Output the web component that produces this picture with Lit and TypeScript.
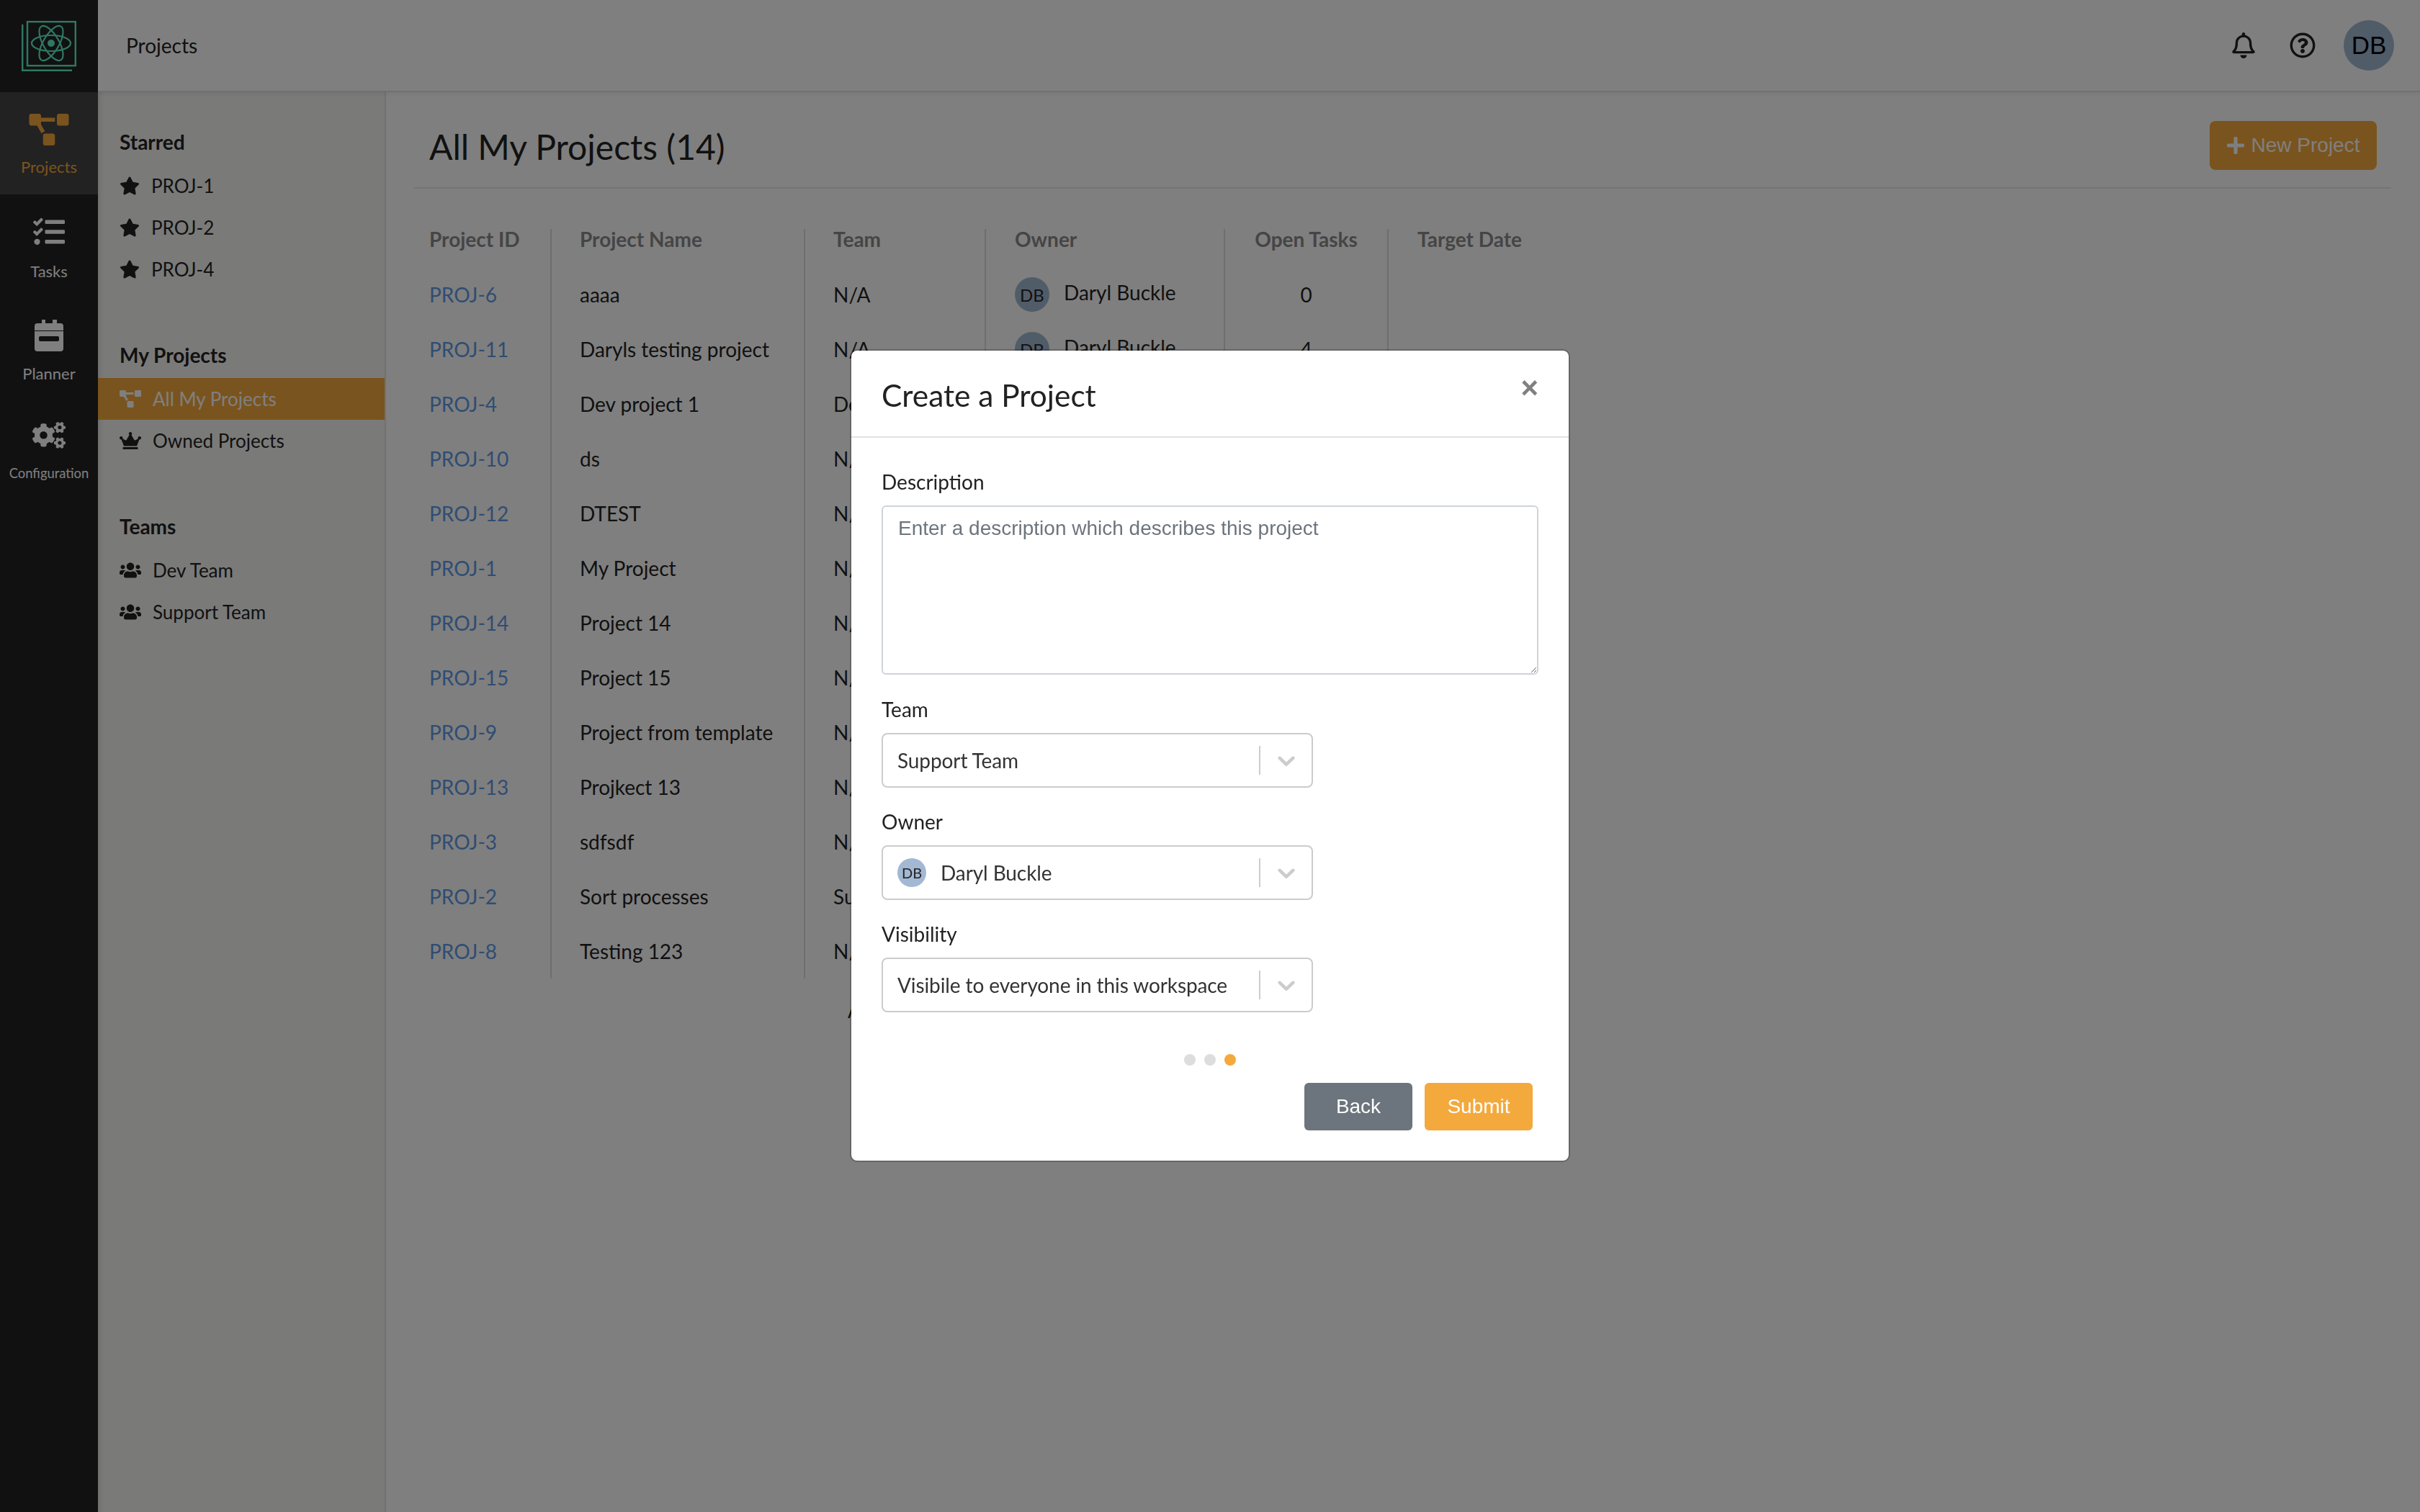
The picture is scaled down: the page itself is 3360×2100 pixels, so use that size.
import { LitElement, css, html, svg } from "lit";
import { customElement } from "lit/decorators.js";

const ICONS = {
  star: ["0 0 576 512", "M259.3 17.8L194 150.2 47.9 171.5c-26.2 3.8-36.7 36.1-17.7 54.6l105.7 103-25 145.5c-4.5 26.3 23.2 46 46.4 33.7L288 439.6l130.7 68.7c23.2 12.2 50.9-7.4 46.4-33.7l-25-145.5 105.7-103c19-18.5 8.5-50.8-17.7-54.6L382 150.2 316.7 17.8c-11.7-23.6-45.6-23.9-57.4 0z"],
  diagram: ["0 0 640 512", "M384 320H256c-17.67 0-32 14.33-32 32v128c0 17.67 14.33 32 32 32h128c17.67 0 32-14.33 32-32V352c0-17.67-14.33-32-32-32zM192 32c0-17.67-14.33-32-32-32H32C14.33 0 0 14.33 0 32v128c0 17.67 14.33 32 32 32h95.72l73.16 128.04C211.98 300.98 232.4 288 256 288h.28L192 175.51V128h224V64H192V32zM608 0H480c-17.67 0-32 14.33-32 32v128c0 17.67 14.33 32 32 32h128c17.67 0 32-14.33 32-32V32c0-17.67-14.33-32-32-32z"],
  tasks: ["0 0 512 512", "M139.61 35.5a12 12 0 0 0-17 0L58.93 98.81l-22.7-22.12a12 12 0 0 0-17 0L3.53 92.41a12 12 0 0 0 0 17l47.59 47.4a12.78 12.78 0 0 0 17.61 0l15.59-15.62L156.52 69a12.09 12.09 0 0 0 .09-17zm0 159.19a12 12 0 0 0-17 0l-63.68 63.72-22.7-22.1a12 12 0 0 0-17 0L3.53 252a12 12 0 0 0 0 17L51 316.5a12.77 12.77 0 0 0 17.6 0l15.7-15.69 72.2-72.22a12 12 0 0 0 .09-16.9zM64 368c-26.49 0-48.59 21.5-48.59 48S37.53 464 64 464a48 48 0 0 0 0-96zm432 16H208a16 16 0 0 0-16 16v32a16 16 0 0 0 16 16h288a16 16 0 0 0 16-16v-32a16 16 0 0 0-16-16zm0-320H208a16 16 0 0 0-16 16v32a16 16 0 0 0 16 16h288a16 16 0 0 0 16-16V80a16 16 0 0 0-16-16zm0 160H208a16 16 0 0 0-16 16v32a16 16 0 0 0 16 16h288a16 16 0 0 0 16-16v-32a16 16 0 0 0-16-16z"],
  calendar: ["0 0 40 44", "M10 0h5v5H25V0h6v5h5a4 4 0 0 1 4 4v6H0V9a4 4 0 0 1 4-4h6zM0 16h40v24a4 4 0 0 1-4 4H4a4 4 0 0 1-4-4zM8 23a2 2 0 0 0-2 2v3a2 2 0 0 0 2 2h24a2 2 0 0 0 2-2v-3a2 2 0 0 0-2-2z"],
  cogs: ["0 0 640 512", "M512.1 191l-8.2 14.3c-3 5.3-9.4 7.5-15.1 5.4-11.8-4.4-22.6-10.7-32.1-18.6-4.6-3.8-5.8-10.5-2.8-15.7l8.2-14.3c-6.9-8-12.3-17.3-15.9-27.4h-16.5c-6 0-11.2-4.3-12.2-10.3-2-12-2.1-24.6 0-37.1 1-6 6.2-10.4 12.2-10.4h16.5c3.6-10.1 9-19.4 15.9-27.4l-8.2-14.3c-3-5.2-1.9-11.9 2.8-15.7 9.5-7.9 20.4-14.2 32.1-18.6 5.7-2.1 12.1.1 15.1 5.4l8.2 14.3c10.5-1.9 21.2-1.9 31.7 0L552 6.3c3-5.3 9.4-7.5 15.1-5.4 11.8 4.4 22.6 10.7 32.1 18.6 4.6 3.8 5.8 10.5 2.8 15.7l-8.2 14.3c6.9 8 12.3 17.3 15.9 27.4h16.5c6 0 11.2 4.3 12.2 10.3 2 12 2.1 24.6 0 37.1-1 6-6.2 10.4-12.2 10.4h-16.5c-3.6 10.1-9 19.4-15.9 27.4l8.2 14.3c3 5.2 1.9 11.9-2.8 15.7-9.5 7.9-20.4 14.2-32.1 18.6-5.7 2.1-12.1-.1-15.1-5.4l-8.2-14.3c-10.4 1.9-21.2 1.9-31.7 0zm-10.5-58.8c38.5 29.6 82.4-14.3 52.8-52.8-38.5-29.7-82.4 14.3-52.8 52.8zM386.3 286.1l33.7 16.8c10.1 5.8 14.5 18.1 10.5 29.1-8.9 24.2-26.4 46.4-42.6 65.8-7.4 8.9-20.2 11.1-30.3 5.3l-29.1-16.8c-16 13.7-34.6 24.6-54.9 31.7v33.6c0 11.6-8.3 21.6-19.7 23.6-24.6 4.2-50.4 4.4-75.9 0-11.5-2-20-11.9-20-23.6V418c-20.3-7.2-38.9-18-54.9-31.7L74 403c-10 5.8-22.9 3.6-30.3-5.3-16.2-19.4-33.3-41.6-42.2-65.7-4-10.9.4-23.2 10.5-29.1l33.3-16.8c-3.9-20.9-3.9-42.4 0-63.4L12 205.8c-10.1-5.8-14.6-18.1-10.5-29 8.9-24.2 26-46.4 42.2-65.8 7.4-8.9 20.2-11.1 30.3-5.3l29.1 16.8c16-13.7 34.6-24.6 54.9-31.7V57.1c0-11.5 8.2-21.5 19.6-23.5 24.6-4.2 50.5-4.4 76-.1 11.5 2 20 11.9 20 23.6v33.6c20.3 7.2 38.9 18 54.9 31.7l29.1-16.8c10-5.8 22.9-3.6 30.3 5.3 16.2 19.4 33.2 41.6 42.1 65.8 4 10.9.1 23.2-10 29.1l-33.7 16.8c3.9 21 3.9 42.5 0 63.5zm-117.6 21.1c59.2-77-28.7-164.9-105.7-105.7-59.2 77 28.7 164.9 105.7 105.7zm243.4 182.7l-8.2 14.3c-3 5.3-9.4 7.5-15.1 5.4-11.8-4.4-22.6-10.7-32.1-18.6-4.6-3.8-5.8-10.5-2.8-15.7l8.2-14.3c-6.9-8-12.3-17.3-15.9-27.4h-16.5c-6 0-11.2-4.3-12.2-10.3-2-12-2.1-24.6 0-37.1 1-6 6.2-10.4 12.2-10.4h16.5c3.6-10.1 9-19.4 15.9-27.4l-8.2-14.3c-3-5.2-1.9-11.9 2.8-15.7 9.5-7.9 20.4-14.2 32.1-18.6 5.7-2.1 12.1.1 15.1 5.4l8.2 14.3c10.5-1.9 21.2-1.9 31.7 0l8.2-14.3c3-5.3 9.4-7.5 15.1-5.4 11.8 4.4 22.6 10.7 32.1 18.6 4.6 3.8 5.8 10.5 2.8 15.7l-8.2 14.3c6.9 8 12.3 17.3 15.9 27.4h16.5c6 0 11.2 4.3 12.2 10.3 2 12 2.1 24.6 0 37.1-1 6-6.2 10.4-12.2 10.4h-16.5c-3.6 10.1-9 19.4-15.9 27.4l8.2 14.3c3 5.2 1.9 11.9-2.8 15.7-9.5 7.9-20.4 14.2-32.1 18.6-5.7 2.1-12.1-.1-15.1-5.4l-8.2-14.3c-10.4 1.9-21.2 1.9-31.7 0zM501.6 431c38.5 29.6 82.4-14.3 52.8-52.8-38.5-29.6-82.4 14.3-52.8 52.8z"],
  crown: ["0 0 640 512", "M528 448H112c-8.8 0-16 7.2-16 16v32c0 8.8 7.2 16 16 16h416c8.8 0 16-7.2 16-16v-32c0-8.8-7.2-16-16-16zm64-320c-26.5 0-48 21.5-48 48 0 7.1 1.6 13.7 4.4 19.8L476 239.2c-15.4 9.2-35.3 4-44.2-11.6L350.3 85C361 76.2 368 63 368 48c0-26.5-21.5-48-48-48s-48 21.5-48 48c0 15 7 28.2 17.7 37l-81.5 142.6c-8.9 15.6-28.9 20.8-44.2 11.6l-72.3-43.4c2.7-6 4.4-12.7 4.4-19.8 0-26.5-21.5-48-48-48S0 149.5 0 176s21.5 48 48 48c2.6 0 5.2-.4 7.7-.8L128 416h384l72.3-192.8c2.5.4 5.1.8 7.7.8 26.5 0 48-21.5 48-48s-21.5-48-48-48z"],
  users: ["0 0 640 512", "M96 224c35.3 0 64-28.7 64-64s-28.7-64-64-64-64 28.7-64 64 28.7 64 64 64zm448 0c35.3 0 64-28.7 64-64s-28.7-64-64-64-64 28.7-64 64 28.7 64 64 64zm32 32h-64c-17.6 0-33.5 7.1-45.1 18.6 40.3 22.1 68.9 62 75.1 109.4h66c17.7 0 32-14.3 32-32v-32c0-35.3-28.7-64-64-64zm-256 0c61.9 0 112-50.1 112-112S381.9 32 320 32 208 82.1 208 144s50.1 112 112 112zm76.8 32h-8.3c-20.8 10-43.9 16-68.5 16s-47.6-6-68.5-16h-8.3C179.6 288 128 339.6 128 403.2V432c0 26.5 21.5 48 48 48h288c26.5 0 48-21.5 48-48v-28.8c0-63.6-51.6-115.2-115.2-115.2zm-223.7-13.4C161.5 263.1 145.6 256 128 256H64c-35.3 0-64 28.7-64 64v32c0 17.7 14.3 32 32 32h65.9c6.3-47.4 34.9-87.3 75.2-109.4z"],
  plus: ["0 0 448 512", "M416 208H272V64c0-17.67-14.33-32-32-32h-32c-17.67 0-32 14.33-32 32v144H32c-17.67 0-32 14.33-32 32v32c0 17.67 14.33 32 32 32h144v144c0 17.67 14.33 32 32 32h32c17.67 0 32-14.33 32-32V304h144c17.67 0 32-14.33 32-32v-32c0-17.67-14.33-32-32-32z"],
  bell: ["0 0 448 512", "M439.39 362.29c-19.32-20.76-55.47-51.99-55.47-154.29 0-77.7-54.48-139.9-127.94-155.16V32c0-17.67-14.32-32-31.98-32s-31.98 14.33-31.98 32v20.84C118.56 68.1 64.08 130.3 64.08 208c0 102.3-36.15 133.53-55.47 154.29-6 6.45-8.66 14.16-8.61 21.71.11 16.4 12.98 32 32.1 32h383.8c19.12 0 32-15.6 32.1-32 .05-7.55-2.61-15.27-8.61-21.71zM67.53 368c21.22-27.97 44.42-74.33 44.53-159.42 0-.2-.06-.38-.06-.58 0-61.86 50.14-112 112-112s112 50.14 112 112c0 .2-.06.38-.06.58.11 85.1 23.31 131.46 44.53 159.42H67.53zM224 512c35.32 0 63.97-28.65 63.97-64H160.03c0 35.35 28.65 64 63.97 64z"],
  help: ["0 0 512 512", "M256 8C119.043 8 8 119.083 8 256c0 136.997 111.043 248 248 248s248-111.003 248-248C504 119.083 392.957 8 256 8zm0 448c-110.532 0-200-89.431-200-200 0-110.495 89.472-200 200-200 110.491 0 200 89.471 200 200 0 110.53-89.431 200-200 200zm107.244-255.2c0 67.052-72.421 68.084-72.421 92.863V300c0 6.627-5.373 12-12 12h-45.647c-6.627 0-12-5.373-12-12v-8.659c0-35.745 27.1-50.034 47.579-61.516 17.561-9.845 28.324-16.541 28.324-29.579 0-17.246-21.999-28.693-39.784-28.693-23.189 0-33.894 10.977-48.942 29.969-4.057 5.12-11.46 6.071-16.666 2.124l-27.824-21.098c-5.107-3.872-6.251-11.066-2.644-16.363C184.846 131.491 214.94 112 261.794 112c49.071 0 101.45 38.304 101.45 88.8zM298 368c0 23.159-18.841 42-42 42s-42-18.841-42-42 18.841-42 42-42 42 18.841 42 42z"],
  chevron: ["0 0 20 20", "M4.516 7.548c0.436-0.446 1.043-0.481 1.576 0l3.908 3.747 3.908-3.747c0.533-0.481 1.141-0.446 1.574 0 0.436 0.445 0.408 1.197 0 1.615-0.406 0.418-4.695 4.502-4.695 4.502-0.217 0.223-0.502 0.335-0.787 0.335s-0.57-0.112-0.789-0.335c0 0-4.287-4.084-4.695-4.502s-0.436-1.17 0-1.615z"],
} as const;

type IconName = keyof typeof ICONS;

const icon = (name: IconName, cls: string) => {
  const [box, d] = ICONS[name];
  return html`<svg class=${cls} viewBox=${box} fill="currentColor" fill-rule="evenodd" aria-hidden="true">${svg`<path d=${d}></path>`}</svg>`;
};

const logo = html`<svg class="logo" viewBox="0 0 76 70" fill="none" stroke="#5ff0c4" aria-hidden="true">
  <rect x="8" y="1.2" width="66.8" height="61" stroke-width="2.4"></rect>
  <path d="M1.2 5V68.8H70" stroke-width="2.4"></path>
  <g stroke-width="2.2">
    <ellipse cx="41" cy="31" rx="27" ry="11"></ellipse>
    <ellipse cx="41" cy="31" rx="27" ry="11" transform="rotate(60 41 31)"></ellipse>
    <ellipse cx="41" cy="31" rx="27" ry="11" transform="rotate(120 41 31)"></ellipse>
  </g>
  <circle cx="41" cy="31" r="5" fill="#5ff0c4" stroke="none"></circle>
</svg>`;

const RAIL: { name: IconName; label: string; cls: string; active?: boolean }[] = [
  { name: "diagram", label: "Projects", cls: "i-projects", active: true },
  { name: "tasks", label: "Tasks", cls: "i-tasks" },
  { name: "calendar", label: "Planner", cls: "i-planner" },
  { name: "cogs", label: "Configuration", cls: "i-cogs" },
];

const ROWS = [
  ["PROJ-6", "aaaa", "N/A", "0"],
  ["PROJ-11", "Daryls testing project", "N/A", "4"],
  ["PROJ-4", "Dev project 1", "Dev Team", "2"],
  ["PROJ-10", "ds", "N/A", "0"],
  ["PROJ-12", "DTEST", "N/A", "0"],
  ["PROJ-1", "My Project", "N/A", "3"],
  ["PROJ-14", "Project 14", "N/A", "0"],
  ["PROJ-15", "Project 15", "N/A", "0"],
  ["PROJ-9", "Project from template", "N/A", "1"],
  ["PROJ-13", "Projkect 13", "N/A", "0"],
  ["PROJ-3", "sdfsdf", "N/A", "0"],
  ["PROJ-2", "Sort processes", "Support Team", "5"],
  ["PROJ-8", "Testing 123", "N/A", "0"],
];

@customElement("app-root")
export class AppRoot extends LitElement {
  static override styles = css`
    :host {
      display: flex;
      min-height: 100vh;
      font-family: Lato, "Noto Sans", sans-serif;
      font-size: 28px;
      color: #222;
      background: #fff;
    }
    .rail {
      width: 136px;
      flex: none;
      background: #222;
      color: #fff;
      position: relative;
      z-index: 2;
    }
    .brand {
      height: 128px;
      display: flex;
      align-items: center;
      justify-content: center;
    }
    .logo {
      width: 76px;
      height: 70px;
    }
    .rail-item {
      display: flex;
      flex-direction: column;
      align-items: center;
      font-size: 22px;
      line-height: 30px;
    }
    .rail-item.active {
      height: 142px;
      background: #444;
      color: #f4a93d;
    }
    .i-projects {
      width: 56px;
      height: 44px;
      margin: 30px 0 15px;
    }
    .i-tasks {
      width: 44px;
      height: 44px;
      margin: 30px 0 18px;
    }
    .i-planner {
      width: 40px;
      height: 44px;
      margin: 52px 0 16px;
    }
    .i-cogs {
      width: 46px;
      height: 37px;
      margin: 52px 0 19px;
    }
    .rail-item.small {
      font-size: 18.4px;
    }
    .right {
      flex: 1;
      min-width: 0;
      display: flex;
      flex-direction: column;
    }
    .topbar {
      height: 128px;
      box-sizing: border-box;
      display: flex;
      align-items: center;
      padding: 0 36px 0 39px;
      background: #fff;
      border-bottom: 2px solid #dde3ea;
      box-shadow: 0 2px 8px rgba(0, 0, 0, 0.08);
      position: relative;
      z-index: 1;
    }
    .crumb {
      flex: 1;
    }
    .bell {
      width: 32px;
      height: 36px;
      margin-right: 48px;
    }
    .help {
      width: 36px;
      height: 36px;
      margin-right: 39px;
    }
    .avatar {
      display: flex;
      align-items: center;
      justify-content: center;
      border-radius: 50%;
      background: #a3b8d3;
      flex: none;
    }
    .avatar.big {
      width: 70px;
      height: 70px;
      font-family: "Liberation Sans", Arial, sans-serif;
      font-size: 35px;
      color: #000;
    }
    .body {
      flex: 1;
      display: flex;
    }
    .side {
      width: 400px;
      box-sizing: border-box;
      flex: none;
      padding-top: 41px;
      background: #f5f5f2;
      border-right: 2px solid #e2e2e0;
      box-shadow: inset 8px 0 8px -6px rgba(0, 0, 0, 0.12);
    }
    .side-group {
      margin-bottom: 62px;
    }
    .side-head {
      height: 58px;
      line-height: 56px;
      padding-left: 30px;
      font-weight: 700;
      margin-bottom: 2px;
    }
    .side-item {
      height: 58px;
      display: flex;
      align-items: center;
      padding-left: 30px;
      gap: 16px;
      font-size: 26px;
    }
    .side-item.on {
      background: #f4a93d;
      color: #fff;
    }
    .side-icon {
      width: 30px;
      height: 24px;
      flex: none;
    }
    .side-icon.star {
      width: 28px;
      height: 26px;
    }
    .main {
      flex: 1;
      min-width: 0;
      padding: 40px 40px 0 39px;
    }
    .main-head {
      height: 94px;
      box-sizing: border-box;
      display: flex;
      justify-content: space-between;
      align-items: flex-start;
      padding: 0 20px 0 21px;
      border-bottom: 2px solid #e8e8e8;
    }
    h1 {
      margin: 0;
      font-size: 48px;
      font-weight: 400;
      line-height: 72px;
    }
    .new {
      width: 232px;
      height: 68px;
      border: none;
      border-radius: 8px;
      background: #f4a93d;
      color: #fff;
      font: 28px "Liberation Sans", Arial, sans-serif;
      display: flex;
      align-items: center;
      justify-content: center;
      gap: 10px;
      padding: 0;
    }
    .new svg {
      width: 24px;
      height: 28px;
    }
    table {
      border-collapse: collapse;
      margin: 56px 0 0;
      table-layout: fixed;
      width: 1552px;
    }
    th {
      height: 53px;
      padding: 0 0 0 40px;
      vertical-align: top;
      line-height: 28px;
      text-align: left;
      font-weight: 700;
      color: #8a8a8a;
      box-sizing: border-box;
      border-right: 2px solid #ddd;
    }
    td {
      height: 76px;
      padding: 0 0 0 40px;
      box-sizing: border-box;
      border-right: 2px solid #ddd;
      white-space: nowrap;
    }
    th:first-child,
    td:first-child {
      padding-left: 21px;
    }
    th:nth-child(2),
    td:nth-child(2),
    th:nth-child(3),
    td:nth-child(3) {
      padding-left: 39px;
    }
    th:last-child,
    td:last-child {
      border-right: none;
    }
    td a {
      color: #5e9ae6;
      text-decoration: none;
    }
    th.num,
    td.num {
      text-align: center;
      padding-left: 0;
    }
    .owner {
      display: flex;
      align-items: center;
      gap: 20px;
    }
    .owner span {
      position: relative;
      top: -3px;
    }
    .avatar.mid {
      width: 48px;
      height: 48px;
      font-size: 24px;
    }
    .peek {
      margin: 23px 0 0 602px;
      line-height: 42px;
    }
    .overlay {
      position: fixed;
      inset: 0;
      z-index: 10;
      background: rgba(0, 0, 0, 0.5);
      display: flex;
      justify-content: center;
      align-items: flex-start;
    }
    .modal {
      width: 1000px;
      height: 1129px;
      box-sizing: border-box;
      margin-top: 485px;
      background: #fff;
      border: 2px solid rgba(0, 0, 0, 0.2);
      background-clip: padding-box;
      border-radius: 10px;
      display: flex;
      flex-direction: column;
    }
    .modal-head {
      display: flex;
      justify-content: space-between;
      align-items: flex-start;
      padding: 32px 42px 27px 42px;
      border-bottom: 2px solid #dee2e6;
    }
    h5 {
      margin: 0;
      font-size: 42.4px;
      font-weight: 400;
      line-height: 60px;
    }
    .close {
      border: none;
      background: none;
      padding: 0;
      font: 700 42px/42px "Liberation Sans", Arial, sans-serif;
      color: #808080;
      margin-top: -1px;
    }
    .modal-body {
      padding: 40px 42px 0 42px;
      display: flex;
      flex-direction: column;
      flex: 1;
    }
    label {
      display: block;
      line-height: 42px;
      margin-bottom: 10px;
    }
    textarea {
      display: block;
      width: 912px;
      height: 235px;
      box-sizing: border-box;
      padding: 9px 21px;
      margin: 2px 0 27px;
      border: 2px solid #ced4da;
      border-radius: 6px;
      font: 28px/42px "Liberation Sans", Arial, sans-serif;
      outline: none;
    }
    textarea::placeholder {
      color: #6c757d;
      opacity: 1;
    }
    .select {
      width: 599px;
      height: 76px;
      box-sizing: border-box;
      margin: 2px 0 26px;
      display: flex;
      align-items: center;
      padding-left: 20px;
      border: 2px solid #ccc;
      border-radius: 8px;
      color: #333;
      gap: 20px;
    }
    .select .value {
      flex: 1;
      white-space: nowrap;
      letter-spacing: -0.1px;
    }
    .sep {
      width: 2px;
      height: 40px;
      background: #ccc;
    }
    .chev {
      width: 40px;
      height: 40px;
      margin: 0 15px 0 -4px;
      color: #ccc;
      flex: none;
    }
    .avatar.small {
      width: 40px;
      height: 40px;
      font-size: 20px;
      color: #222;
    }
    .dots {
      display: flex;
      justify-content: center;
      gap: 12px;
      margin: 32px 0 24px;
    }
    .dot {
      width: 16px;
      height: 16px;
      border-radius: 50%;
      background: #ddd;
    }
    .dot.on {
      background: #f4a93d;
    }
    .actions {
      display: flex;
      justify-content: flex-end;
      gap: 17px;
      padding-right: 8px;
    }
    .btn {
      width: 150px;
      height: 66px;
      border: none;
      border-radius: 6px;
      color: #fff;
      font: 28px "Liberation Sans", Arial, sans-serif;
      background: #6c757d;
    }
    .btn.primary {
      background: #f4a93d;
    }
  `;

  private sideItem(name: IconName, label: string, on = false) {
    return html`<div class="side-item ${on ? "on" : ""}">
      ${icon(name, name === "star" ? "side-icon star" : "side-icon")}<span>${label}</span>
    </div>`;
  }

  private select(value: unknown, withAvatar = false) {
    return html`<div class="select">
      ${withAvatar ? html`<div class="avatar small">DB</div>` : ""}
      <span class="value">${value}</span>
      <span class="sep"></span>
      ${icon("chevron", "chev")}
    </div>`;
  }

  override render() {
    return html`
      <nav class="rail">
        <div class="brand">${logo}</div>
        ${RAIL.map(
          (r) => html`<div class="rail-item ${r.active ? "active" : ""} ${r.label === "Configuration" ? "small" : ""}">
            ${icon(r.name, r.cls)}<span>${r.label}</span>
          </div>`
        )}
      </nav>
      <div class="right">
        <header class="topbar">
          <span class="crumb">Projects</span>
          ${icon("bell", "bell")} ${icon("help", "help")}
          <div class="avatar big">DB</div>
        </header>
        <div class="body">
          <aside class="side">
            <div class="side-group">
              <div class="side-head">Starred</div>
              ${["PROJ-1", "PROJ-2", "PROJ-4"].map((p) => this.sideItem("star", p))}
            </div>
            <div class="side-group">
              <div class="side-head">My Projects</div>
              ${this.sideItem("diagram", "All My Projects", true)} ${this.sideItem("crown", "Owned Projects")}
            </div>
            <div class="side-group">
              <div class="side-head">Teams</div>
              ${this.sideItem("users", "Dev Team")} ${this.sideItem("users", "Support Team")}
            </div>
          </aside>
          <main class="main">
            <div class="main-head">
              <h1>All My Projects (14)</h1>
              <button class="new">${icon("plus", "")}New Project</button>
            </div>
            <table>
              <colgroup>
                <col style="width:190px" />
                <col style="width:352px" />
                <col style="width:251px" />
                <col style="width:332px" />
                <col style="width:227px" />
                <col style="width:200px" />
              </colgroup>
              <thead>
                <tr>
                  <th>Project ID</th>
                  <th>Project Name</th>
                  <th>Team</th>
                  <th>Owner</th>
                  <th class="num">Open Tasks</th>
                  <th>Target Date</th>
                </tr>
              </thead>
              <tbody>
                ${ROWS.map(
                  (r) => html`<tr>
                    <td><a>${r[0]}</a></td>
                    <td>${r[1]}</td>
                    <td>${r[2]}</td>
                    <td>
                      <div class="owner"><div class="avatar mid">DB</div><span>Daryl Buckle</span></div>
                    </td>
                    <td class="num">${r[3]}</td>
                    <td></td>
                  </tr>`
                )}
              </tbody>
            </table>
            <div class="peek">A</div>
          </main>
        </div>
      </div>
      <div class="overlay">
        <div class="modal">
          <div class="modal-head">
            <h5>Create a Project</h5>
            <button class="close">×</button>
          </div>
          <div class="modal-body">
            <label>Description</label>
            <textarea placeholder="Enter a description which describes this project"></textarea>
            <label>Team</label>
            ${this.select("Support Team")}
            <label>Owner</label>
            ${this.select("Daryl Buckle", true)}
            <label>Visibility</label>
            ${this.select("Visibile to everyone in this workspace")}
            <div class="dots">
              <span class="dot"></span><span class="dot"></span><span class="dot on"></span>
            </div>
            <div class="actions">
              <button class="btn">Back</button>
              <button class="btn primary">Submit</button>
            </div>
          </div>
        </div>
      </div>
    `;
  }
}
